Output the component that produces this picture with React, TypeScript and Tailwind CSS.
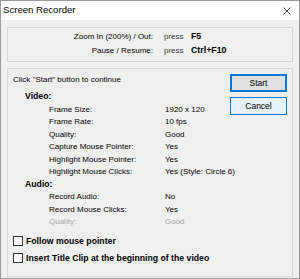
import React from "react";

const font = { fontFamily: '"Liberation Sans", Arial, sans-serif' };

function Row({ label, value, dim }: { label: string; value: string; dim?: boolean }) {
  return (
    <div className={`flex h-[12.5px] items-center ${dim ? "text-[#a8a8a8]" : "text-black"}`}>
      <span className="w-[152px] pl-[36px] shrink-0 whitespace-nowrap">{label}</span>
      <span className="whitespace-nowrap">{value}</span>
    </div>
  );
}

function Heading({ children }: { children: React.ReactNode }) {
  return (
    <div className="flex h-[12.5px] items-center pl-[12px] text-[8.7px] font-bold">{children}</div>
  );
}

function Check({ label }: { label: string }) {
  return (
    <label className="flex h-[17px] items-center gap-[3px]">
      <span className="h-[10px] w-[10px] shrink-0 border border-[#333] bg-white" />
      <span className="text-[8.7px] font-bold whitespace-nowrap">{label}</span>
    </label>
  );
}

export default function App() {
  return (
    <div
      style={font}
      className="flex h-[279px] w-[300px] flex-col border border-[#9a9a9a] bg-[#f0f0f0] text-[8px] text-black"
    >
      {/* title bar */}
      <div className="flex h-[19px] shrink-0 items-center justify-between bg-white pl-[2px] pr-[8px]">
        <span className="text-[9.6px]">Screen Recorder</span>
        <svg width="8" height="8" viewBox="0 0 8 8" className="mt-[1px]">
          <path d="M0.5 0.5 L7.5 7.5 M7.5 0.5 L0.5 7.5" stroke="#333" strokeWidth="0.9" />
        </svg>
      </div>

      <div className="flex flex-1 flex-col px-[6px] pt-[7px]">
        {/* hotkeys */}
        <div className="h-[35px] border border-[#d6d6d6] pt-[2px]">
          <div className="flex h-[14px] items-center">
            <span className="w-[145px] text-right">Zoom In (200%) / Out:</span>
            <span className="ml-[11px] w-[27px] text-[#3a3a3a]">press</span>
            <span className="text-[8.8px] font-bold">F5</span>
          </div>
          <div className="flex h-[14px] items-center">
            <span className="w-[145px] text-right">Pause / Resume:</span>
            <span className="ml-[11px] w-[27px] text-[#3a3a3a]">press</span>
            <span className="text-[8.8px] font-bold">Ctrl+F10</span>
          </div>
        </div>

        {/* settings */}
        <div className="mt-[6px] flex h-[209px] border border-[#d6d6d6] pl-[5px] pr-[5px] pt-[5px]">
          <div className="min-w-0 flex-1">
            <div className="flex h-[12px] items-center">Click "Start" button to continue</div>
            <div className="mt-[4.75px]">
              <Heading>Video:</Heading>
              <Row label="Frame Size:" value="1920 x 120" />
              <Row label="Frame Rate:" value="10 fps" />
              <Row label="Quality:" value="Good" />
              <Row label="Capture Mouse Pointer:" value="Yes" />
              <Row label="Highlight Mouse Pointer:" value="Yes" />
              <Row label="Highlight Mouse Clicks:" value="Yes (Style: Circle 6)" />
              <Heading>Audio:</Heading>
              <Row label="Record Audio:" value="No" />
              <Row label="Record Mouse Clicks:" value="Yes" />
              <Row label="Quality:" value="Good" dim />
            </div>
            <div className="mt-[4.5px]">
              <Check label="Follow mouse pointer" />
              <Check label="Insert Title Clip at the beginning of the video" />
            </div>
          </div>
          <div className="flex w-[57px] shrink-0 flex-col gap-[5px]">
            <button className="h-[18px] w-[57px] border-2 border-[#0078d7] bg-[#e1e1e1] text-[8.5px]">
              Start
            </button>
            <button className="h-[18px] w-[57px] border border-[#0078d7] bg-[#e5f1fb] text-[8.5px]">
              Cancel
            </button>
          </div>
        </div>
      </div>
    </div>
  );
}
